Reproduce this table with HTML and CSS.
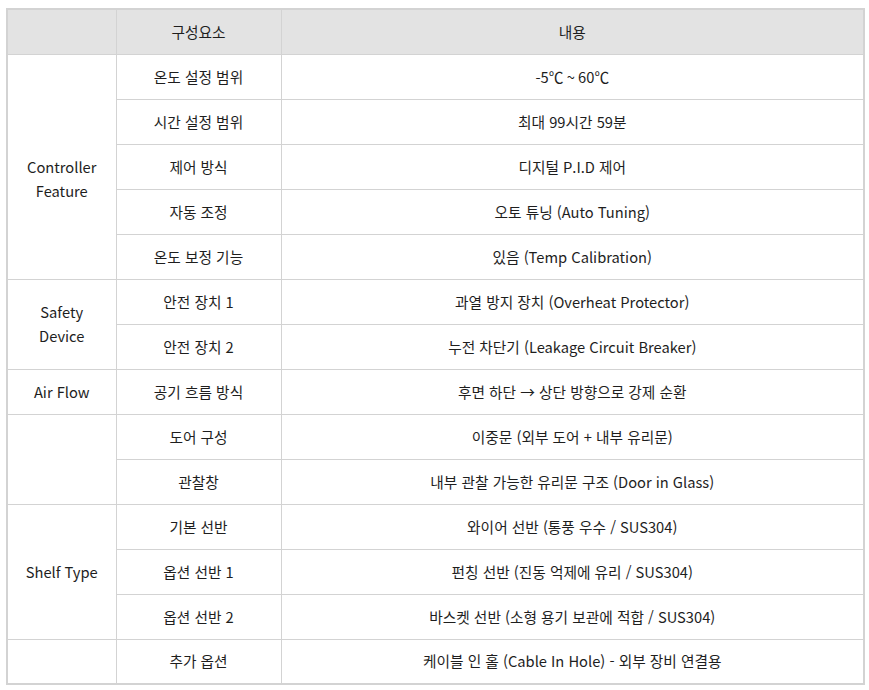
FILE: index.html
```html
<!DOCTYPE html>
<html lang="ko">
<head>
<meta charset="utf-8">
<link rel="stylesheet" href="styles.css">
</head>
<body>
<table class="spec">
  <colgroup>
    <col class="c1"><col class="c2"><col class="c3">
  </colgroup>
  <thead>
    <tr><th></th><th>구성요소</th><th>내용</th></tr>
  </thead>
  <tbody>
    <tr><td rowspan="5" class="lowered">Controller<br>Feature</td><td>온도 설정 범위</td><td>-5℃ ~ 60℃</td></tr>
    <tr><td>시간 설정 범위</td><td>최대 99시간 59분</td></tr>
    <tr><td>제어 방식</td><td>디지털 P.I.D 제어</td></tr>
    <tr><td>자동 조정</td><td>오토 튜닝 (Auto Tuning)</td></tr>
    <tr><td>온도 보정 기능</td><td>있음 (Temp Calibration)</td></tr>
    <tr><td rowspan="2">Safety<br>Device</td><td>안전 장치 1</td><td>과열 방지 장치 (Overheat Protector)</td></tr>
    <tr><td>안전 장치 2</td><td>누전 차단기 (Leakage Circuit Breaker)</td></tr>
    <tr><td>Air Flow</td><td>공기 흐름 방식</td><td>후면 하단 → 상단 방향으로 강제 순환</td></tr>
    <tr><td rowspan="2"></td><td>도어 구성</td><td>이중문 (외부 도어 + 내부 유리문)</td></tr>
    <tr><td>관찰창</td><td>내부 관찰 가능한 유리문 구조 (Door in Glass)</td></tr>
    <tr><td rowspan="3">Shelf Type</td><td>기본 선반</td><td>와이어 선반 (통풍 우수 / SUS304)</td></tr>
    <tr><td>옵션 선반 1</td><td>펀칭 선반 (진동 억제에 유리 / SUS304)</td></tr>
    <tr><td>옵션 선반 2</td><td>바스켓 선반 (소형 용기 보관에 적합 / SUS304)</td></tr>
    <tr><td></td><td>추가 옵션</td><td>케이블 인 홀 (Cable In Hole) - 외부 장비 연결용</td></tr>
  </tbody>
</table>
</body>
</html>
```

FILE: styles.css
```css
html, body {
  margin: 0;
  padding: 0;
  background: #ffffff;
}
body {
  padding: 8px 4px 0 6px;
  font-family: "Noto Sans CJK KR", "Noto Sans", sans-serif;
  font-size: 14.7px;
  color: #1e1e1e;
}
.spec {
  border-collapse: collapse;
  width: 859px;
  border: 2px solid #d3d3d3;
  table-layout: fixed;
}
.c1 { width: 109px; }
.c2 { width: 165px; }
.spec th,
.spec td {
  border: 1px solid #d3d3d3;
  padding: 0 6px;
  text-align: center;
  vertical-align: middle;
  font-weight: normal;
  line-height: 24px;
  box-sizing: border-box;
}
.spec thead th {
  background: #e3e3e3;
  height: 45px;
}
.spec tbody td {
  height: 45px;
}
.spec td.lowered {
  padding-top: 24px;
}
```
